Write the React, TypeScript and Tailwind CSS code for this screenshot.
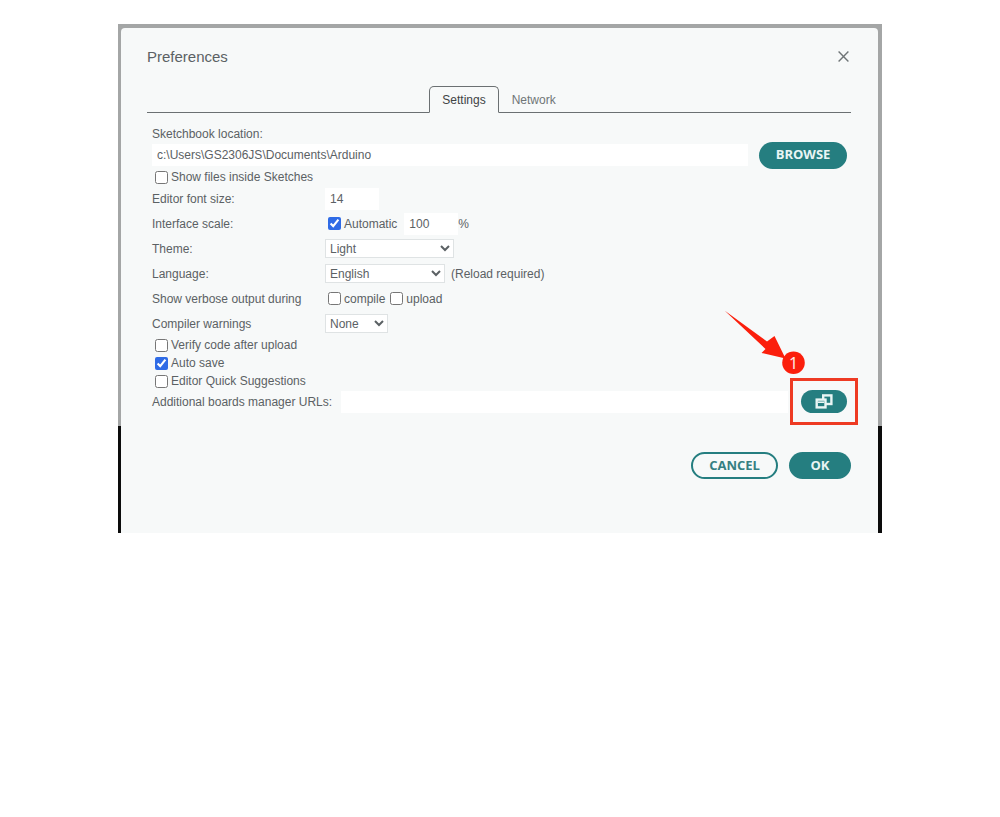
import React, { useState } from "react";
import clsx from "clsx";

type CheckProps = {
    id: string;
    label: string;
    defaultChecked?: boolean;
};

const Check = ({ id, label, defaultChecked }: CheckProps) => {
    return (
        <span className="flex items-center gap-[3px]">
            <input
                id={id}
                type="checkbox"
                defaultChecked={defaultChecked}
                className="size-[13px] accent-[#2f6be6]"
            />
            <label htmlFor={id}>{label}</label>
        </span>
    );
};

type RowProps = {
    label: string;
    htmlFor?: string;
    children: React.ReactNode;
};

const Row = ({ label, htmlFor, children }: RowProps) => {
    return (
        <div className="flex h-[25px] items-center">
            {htmlFor ? (
                <label htmlFor={htmlFor} className="w-[173px] shrink-0">
                    {label}
                </label>
            ) : (
                <span className="w-[173px] shrink-0">{label}</span>
            )}
            {children}
        </div>
    );
};

type SelectProps = {
    id: string;
    options: string[];
    className: string;
};

const Select = ({ id, options, className }: SelectProps) => {
    return (
        <select
            id={id}
            className={clsx("h-[19px] border border-[#dfe3e4] bg-white", className)}
        >
            {options.map((option) => (
                <option key={option}>{option}</option>
            ))}
        </select>
    );
};

const tabs = ["Settings", "Network"];

const App = () => {
    const [activeTab, setActiveTab] = useState("Settings");
    const [path, setPath] = useState("c:\\Users\\GS2306JS\\Documents\\Arduino");

    return (
        <main className="bg-white px-4 pt-6 font-['Liberation_Sans',Arial,sans-serif] text-xs text-[#5b6164]">
            <div className="mx-auto max-w-[764px] bg-[linear-gradient(#a4a6a6_402px,#0c0c0c_402px)] pt-1 pr-1 pl-[3px]">
                <section className="rounded-t-sm bg-[#f7f9f9] pt-4 pr-[27px] pb-[54px] pl-[26px]">
                    {/* Header */}
                    <header className="flex h-[25px] items-center justify-between">
                        <h1 className="text-[15px]">Preferences</h1>
                        <button type="button" aria-label="Close" className="px-[2px]">
                            <svg width="11" height="11" viewBox="0 0 11 11" stroke="#6f7577" strokeWidth="1.4">
                                <path d="M0.6 0.6 10.4 10.4M10.4 0.6 0.6 10.4" />
                            </svg>
                        </button>
                    </header>

                    {/* Tabs */}
                    <div role="tablist" className="mt-[17px] flex h-[27px] justify-center border-b border-[#6b7072]">
                        {tabs.map((tab) => (
                            <button
                                key={tab}
                                type="button"
                                role="tab"
                                aria-selected={activeTab === tab}
                                onClick={() => setActiveTab(tab)}
                                className={clsx(
                                    "-mb-px rounded-t-[5px] border px-3",
                                    activeTab === tab
                                        ? "border-[#6b7072] border-b-[#f7f9f9] bg-[#f7f9f9] text-[#3f4345]"
                                        : "border-transparent text-[#6f7577]"
                                )}
                            >
                                {tab}
                            </button>
                        ))}
                    </div>

                    {/* Settings */}
                    <form className="pt-[13px] pr-1 pl-[5px]" onSubmit={(e) => e.preventDefault()}>
                        <label htmlFor="path" className="block leading-4">
                            Sketchbook location:
                        </label>
                        <div className="flex h-[26px] items-center gap-[11px]">
                            <input
                                id="path"
                                value={path}
                                onChange={(e) => setPath(e.target.value)}
                                className="h-[22px] min-w-0 flex-1 bg-white px-[5px]"
                            />
                            <button
                                type="button"
                                className="h-[27px] w-[88px] shrink-0 rounded-full bg-[#257e80] font-['Open_Sans',sans-serif] text-[13px] font-bold text-[#e9f5f4]"
                            >
                                BROWSE
                            </button>
                        </div>
                        <div className="flex h-[18px] items-center pl-[3px]">
                            <Check id="show-files" label="Show files inside Sketches" />
                        </div>

                        <Row label="Editor font size:" htmlFor="font-size">
                            <input id="font-size" defaultValue="14" className="h-[22px] w-[54px] bg-white px-[5px]" />
                        </Row>
                        <Row label="Interface scale:" htmlFor="scale">
                            <div className="flex items-center pl-[3px]">
                                <Check id="auto-scale" label="Automatic" defaultChecked />
                                <input id="scale" defaultValue="100" className="ml-[7px] h-[22px] w-[54px] bg-white px-[5px]" />
                                <span>%</span>
                            </div>
                        </Row>
                        <Row label="Theme:" htmlFor="theme">
                            <Select id="theme" options={["Light", "Dark"]} className="w-[129px]" />
                        </Row>
                        <Row label="Language:" htmlFor="language">
                            <Select id="language" options={["English", "Deutsch"]} className="w-[120px]" />
                            <span className="ml-[6px]">(Reload required)</span>
                        </Row>
                        <Row label="Show verbose output during">
                            <div className="flex items-center gap-[5px] pl-[3px]">
                                <Check id="compile" label="compile" />
                                <Check id="upload" label="upload" />
                            </div>
                        </Row>
                        <Row label="Compiler warnings" htmlFor="warnings">
                            <Select id="warnings" options={["None", "All"]} className="w-[63px]" />
                        </Row>

                        <div className="grid auto-rows-[18px] items-center pl-[3px]">
                            <Check id="verify" label="Verify code after upload" />
                            <Check id="auto-save" label="Auto save" defaultChecked />
                            <Check id="suggestions" label="Editor Quick Suggestions" />
                        </div>

                        <div className="flex items-center">
                            <label htmlFor="urls" className="shrink-0">
                                Additional boards manager URLs:
                            </label>
                            <input id="urls" className="ml-[9px] h-[22px] min-w-0 flex-1 bg-white px-[5px]" />
                            <div className="relative ml-[13px] shrink-0">
                                <button
                                    type="button"
                                    aria-label="Edit URLs"
                                    className="flex h-[23px] w-[46px] items-center justify-center rounded-full bg-[#257e80]"
                                >
                                    <svg width="18" height="15" viewBox="0 0 18 15" fill="#257e80" stroke="#e9f5f4" strokeWidth="2.4">
                                        <rect x="8.2" y="1.4" width="8.2" height="8.6" />
                                        <rect x="1.7" y="5.6" width="8.8" height="7.8" />
                                        <path d="M3 8.2H9.2" strokeWidth="1.6" />
                                    </svg>
                                </button>
                                {/* Callout around the button */}
                                <div className="pointer-events-none absolute -inset-x-[11px] -inset-y-3 border-[3px] border-[#ee3b24]" />
                                <svg
                                    className="pointer-events-none absolute -top-20 right-[42px]"
                                    width="82"
                                    height="66"
                                    viewBox="0 0 82 66"
                                    fill="#fb1f0c"
                                >
                                    <path d="M1.5 0.5 44 31.5 51.5 26 62.5 48.5 38.5 43 42.5 39Z" />
                                    <circle cx="70.5" cy="52.7" r="11.3" />
                                    <text
                                        x="70.5"
                                        y="58.5"
                                        fontSize="16"
                                        textAnchor="middle"
                                        fill="#ffe9e4"
                                        className="font-['Noto_Sans',sans-serif]"
                                    >
                                        1
                                    </text>
                                </svg>
                            </div>
                        </div>
                    </form>

                    {/* Footer */}
                    <footer className="mt-[39px] flex justify-end gap-[11px] font-['Open_Sans',sans-serif] text-[13px] font-bold">
                        <button
                            type="button"
                            className="h-[27px] w-[87px] rounded-full border-2 border-[#257e80] text-[#357f82]"
                        >
                            CANCEL
                        </button>
                        <button type="button" className="h-[27px] w-[62px] rounded-full bg-[#257e80] text-[#e9f5f4]">
                            OK
                        </button>
                    </footer>
                </section>
            </div>
        </main>
    );
};

export default App;
